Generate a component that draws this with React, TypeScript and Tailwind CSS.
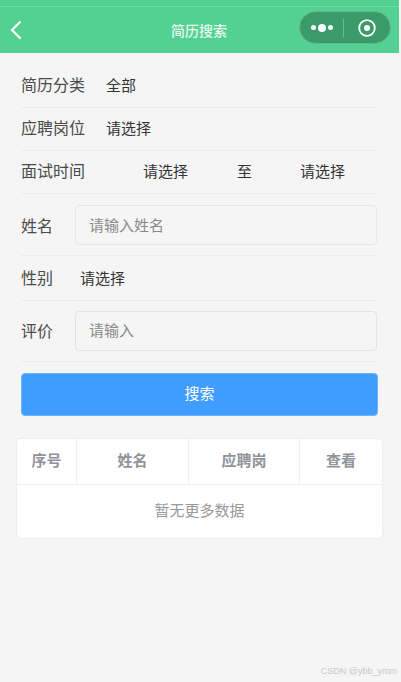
import React from "react";

const cjk = "font-['Liberation_Sans','Noto_Sans_CJK_SC',sans-serif]";

const Row = ({ className, children }: { className: string; children: React.ReactNode }) => (
  <div className={`flex items-center border-b border-[#ececec] ${className}`}>{children}</div>
);

const Label = ({ children, className = "w-[85px]" }: { children: string; className?: string }) => (
  <span className={`text-[16px] leading-[22px] text-[#4a4a4a] shrink-0 ${className}`}>{children}</span>
);

const Value = ({ children, className = "" }: { children: string; className?: string }) => (
  <span className={`text-[15px] leading-[20px] text-[#333333] ${className}`}>{children}</span>
);

const App = () => {
  return (
    <div className={`relative w-[401px] h-[682px] overflow-hidden bg-[#f5f5f5] ${cjk}`}>
      {/* 顶部导航 */}
      <div className="relative h-[53px] w-[399px] bg-[#53d192]">
        <div className="h-[7px] border-b border-[#74dba8]" />
        <div className="flex items-center h-[46px] pl-[10px] pr-[11px]">
          <svg width="12" height="20" viewBox="0 0 12 20" fill="none" className="shrink-0">
            <path d="M10.5 1.5 L2 10 L10.5 18.5" stroke="#ffffff" strokeWidth="2.2" />
          </svg>
          <div className="flex-1 text-center text-[14px] font-medium text-[#eafaf2] pr-[12px] pt-[2px]">简历搜索</div>
        </div>
        <div className="absolute left-[299px] top-[11px] flex items-center w-[92px] h-[33px] rounded-full bg-[#3a9a69] border border-[#64b98e]">
          <div className="flex items-center gap-[2px] pl-[11px]">
            <span className="w-[5px] h-[5px] rounded-full bg-white" />
            <span className="w-[8px] h-[8px] rounded-full bg-white" />
            <span className="w-[5px] h-[5px] rounded-full bg-white" />
          </div>
          <div className="w-px h-[18px] bg-[#6db593] ml-[10px]" />
          <svg width="18" height="18" viewBox="0 0 18 18" fill="none" className="ml-[14px]">
            <circle cx="9" cy="9" r="7.8" stroke="#ffffff" strokeWidth="1.8" />
            <circle cx="9" cy="9" r="3" fill="#ffffff" />
          </svg>
        </div>
      </div>

      {/* 搜索表单 */}
      <div className="flex flex-col w-[356px] ml-[21px]">
        <Row className="h-[55px] pt-[11px]">
          <Label>简历分类</Label>
          <Value>全部</Value>
        </Row>
        <Row className="h-[43px]">
          <Label>应聘岗位</Label>
          <Value>请选择</Value>
        </Row>
        <Row className="h-[43px]">
          <Label className="w-[122px]">面试时间</Label>
          <Value className="w-[94px]">请选择</Value>
          <Value className="w-[63px]">至</Value>
          <Value>请选择</Value>
        </Row>
        <Row className="h-[62px]">
          <Label className="w-[54px] pt-[4px]">姓名</Label>
          <div className="flex items-center flex-1 h-[40px] pl-[13px] pt-[3px] rounded-[4px] border border-[#e6e6e6]">
            <span className="text-[15px] text-[#8a8a8a]">请输入姓名</span>
          </div>
        </Row>
        <Row className="h-[45px] pt-[1px]">
          <Label className="w-[59px]">性别</Label>
          <Value>请选择</Value>
        </Row>
        <Row className="h-[61px]">
          <Label className="w-[54px] pt-[2px]">评价</Label>
          <div className="flex items-center flex-1 h-[40px] pl-[13px] pt-[1px] rounded-[4px] border border-[#e3e3e3]">
            <span className="text-[15px] text-[#8a8a8a]">请输入</span>
          </div>
        </Row>
        <button className="mt-[11px] h-[43px] w-[357px] rounded-[4px] bg-[#3e9dff] border border-[#6cb4ff] text-[15px] text-white">
          搜索
        </button>
      </div>

      {/* 结果表格 */}
      <div className="mt-[22px] ml-[16px] w-[367px] h-[101px] rounded-[5px] bg-white border border-[#eeeef2] overflow-hidden">
        <div className="flex h-[46px] border-b border-[#eeeef6] text-[15px] font-bold text-[#909399]">
          <div className="flex items-center justify-center w-[60px] border-r border-[#eeeef6]">序号</div>
          <div className="flex items-center justify-center w-[112px] border-r border-[#eeeef6]">姓名</div>
          <div className="flex items-center justify-center w-[111px] border-r border-[#eeeef6]">应聘岗</div>
          <div className="flex items-center justify-center flex-1">查看</div>
        </div>
        <div className="flex items-center justify-center h-[53px] text-[15px] text-[#999999]">暂无更多数据</div>
      </div>

      {/* 水印 */}
      <div className="absolute right-[4px] bottom-[5px] text-[9px] leading-[12px] text-[#c8c8c8]">CSDN @ybb_ymm</div>
    </div>
  );
};

export default App;
